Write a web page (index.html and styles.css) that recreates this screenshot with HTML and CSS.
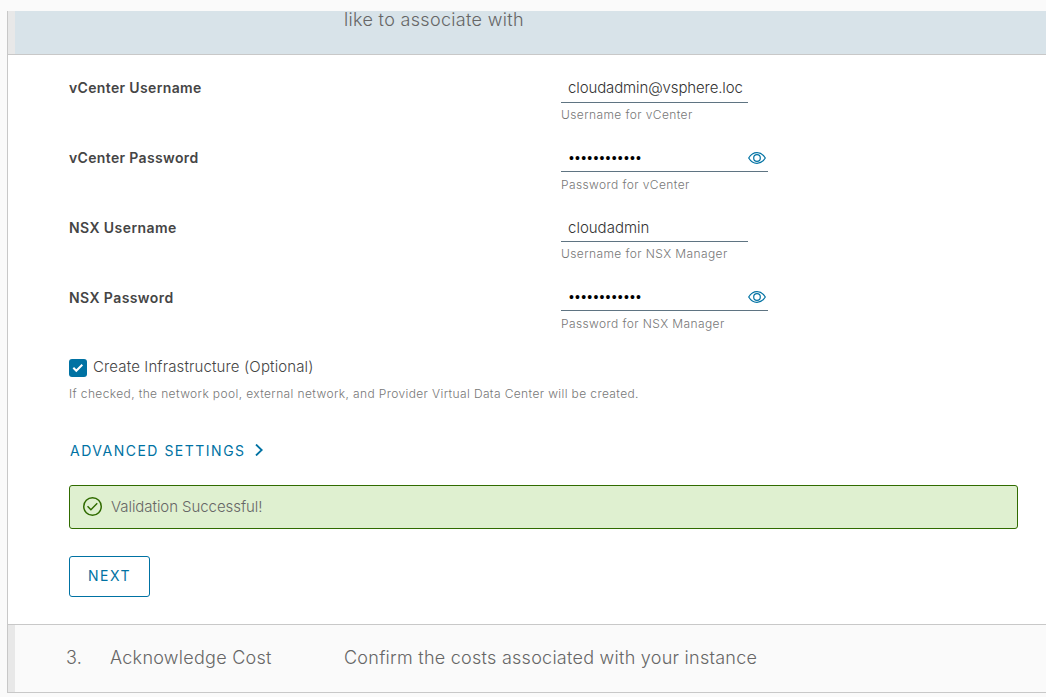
FILE: index.html
```
<!DOCTYPE html>
<html lang="en">
<head>
<meta charset="utf-8">
<title>Associate instance</title>
<link rel="stylesheet" href="styles.css">
</head>
<body>
<main class="stepper">
  <header class="step step-active"><span class="step-desc desc-active">like to associate with</span></header>
  <section class="content">
    <div class="row">
      <label class="label">vCenter Username</label>
      <div class="field"><div class="control"><span class="value value-long">cloudadmin@vsphere.loc</span></div><p class="help">Username for vCenter</p></div>
    </div>
    <div class="row">
      <label class="label">vCenter Password</label>
      <div class="field"><div class="control wide"><span class="dots">••••••••••••</span>
        <svg class="eye" viewBox="0 0 18 12"><path d="M.7 6C2.8 2.5 5.6.7 9 .7S15.200 2.500 17.300 6C15.200 9.500 12.400 11.300 9 11.300S2.800 9.500.7 6Z"/><circle cx="9" cy="6" r="3.300"/></svg></div><p class="help">Password for vCenter</p></div>
    </div>
    <div class="row">
      <label class="label label-nsx">NSX Username</label>
      <div class="field"><div class="control control-nsx"><span class="value">cloudadmin</span></div><p class="help">Username for NSX Manager</p></div>
    </div>
    <div class="row">
      <label class="label label-nsx">NSX Password</label>
      <div class="field"><div class="control wide"><span class="dots">••••••••••••</span>
        <svg class="eye" viewBox="0 0 18 12"><path d="M.7 6C2.8 2.5 5.6.7 9 .7S15.200 2.500 17.300 6C15.200 9.500 12.400 11.300 9 11.300S2.800 9.500.7 6Z"/><circle cx="9" cy="6" r="3.300"/></svg></div><p class="help">Password for NSX Manager</p></div>
    </div>
    <div class="check-row">
      <span class="checkbox"><svg viewBox="0 0 18 18"><path d="M4.300 8.800l3 3 6-6"/></svg></span>
      <span class="check-label">Create Infrastructure (Optional)</span>
    </div>
    <p class="check-help">If checked, the network pool, external network, and Provider Virtual Data Center will be created.</p>
    <div class="advanced"><span class="adv-text">ADVANCED SETTINGS</span><svg class="chevron" viewBox="0 0 8 12"><path d="M1 .5L6.700 6L1 11.500"/></svg></div>
    <div class="alert">
      <svg class="ok" viewBox="0 0 18 18"><circle cx="9" cy="9" r="8.300"/><path d="M4.300 8.800l3.200 3.200 6-6"/></svg>
      <span class="alert-text">Validation Successful!</span>
    </div>
    <button class="next"><span class="next-text">NEXT</span></button>
  </section>
  <footer class="step step-next">
    <span class="num">3.</span><span class="title">Acknowledge Cost</span><span class="step-desc desc-next">Confirm the costs associated with your instance</span>
  </footer>
</main>
</body>
</html>
```
FILE: styles.css
```
* { box-sizing: border-box; }
body { margin: 0; height: 697px; padding: 11px 0 0 7px; overflow: hidden; background: #fafafa; font-family: Inter, "Open Sans", sans-serif; font-weight: 300; color: #454545; }
p { margin: 0; }
span, label, p { white-space: nowrap; }
svg { display: block; flex: none; fill: none; }
.stepper { border-left: 1px solid #c8c8c8; background: #fff; height: 682px; }
.step { display: flex; color: #666; font-size: 18px; line-height: 24px; letter-spacing: .32px; background-image: linear-gradient(#e8e8e8, #e8e8e8); background-size: 7px 100%; background-repeat: no-repeat; border-bottom: 1px solid #c8c8c8; }
.step-active { height: 44px; background-color: #d8e3e9; padding-left: 336px; }
.step-desc { margin-top: -3px; }
.content { height: 569px; padding: 20px 28px 0 61px; }
.row { display: grid; grid-template-columns: 492px 1fr; height: 69.600px; }
.label { font-size: 14px; font-weight: 600; line-height: 20px; padding-top: 3px; letter-spacing: .35px; }
.label-nsx { padding-top: 4px; letter-spacing: .42px; }
.control { width: 187px; height: 28px; display: flex; align-items: center; justify-content: space-between; padding: 0 0 1px 7px; border-bottom: 1px solid #5f7482; }
.control-nsx { padding-bottom: 0; }
.control.wide { width: 207px; height: 27.500px; padding: 0 2px 0 8px; }
.wide + .help { margin-top: 4.500px; }
.value { font-size: 15px; line-height: 20px; color: #333; }
.value-long { letter-spacing: -.12px; }
.dots { font-family: "Liberation Sans", sans-serif; font-size: 14px; line-height: 16px; letter-spacing: 1.200px; color: #000; }
.eye { width: 18px; height: 12px; stroke: #0072a3; stroke-width: 1.200; }
.help { font-size: 12px; line-height: 16px; margin-top: 4px; color: #777; letter-spacing: .4px; }
.check-row { display: flex; align-items: center; gap: 6px; height: 20px; margin-top: 4.600px; }
.checkbox { width: 18px; height: 18px; border-radius: 3px; background: #0072a3; }
.checkbox svg { width: 18px; height: 18px; stroke: #fff; stroke-width: 2; }
.check-label { font-size: 15px; line-height: 20px; letter-spacing: .13px; margin-top: -2px; }
.check-help { font-size: 12px; line-height: 16px; margin-top: 8px; color: #777; letter-spacing: .38px; }
.advanced { display: flex; align-items: center; gap: 9.500px; margin: 39px 0 0 1px; height: 20px; color: #0072a3; }
.adv-text, .next-text { font-size: 14px; font-weight: 400; letter-spacing: 1.500px; }
.chevron { width: 8px; height: 12px; margin-top: -2px; stroke: #0072a3; stroke-width: 1.800; }
.alert { display: flex; align-items: center; gap: 9px; height: 44px; margin-top: 24px; padding: 0 0 1px 13px; border: 1px solid #306b00; border-radius: 3px; background: #dff0d0; }
.ok { width: 19px; height: 19px; stroke: #306b00; stroke-width: 1.400; }
.alert-text { font-size: 15px; color: #666; letter-spacing: -.06px; }
.next { display: block; margin-top: 27px; width: 81px; height: 41px; padding: 0 0 1px; border: 1px solid #0072a3; border-radius: 3px; background: #fff; color: #0072a3; font-family: inherit; }
.step-next { height: 69px; background-color: #fafafa; padding: 21px 0 0 58px; border-top: 1px solid #c8c8c8; letter-spacing: .26px; }
.num { width: 44px; }
.title { width: 234px; }
.desc-next { margin-top: 0; }
```
